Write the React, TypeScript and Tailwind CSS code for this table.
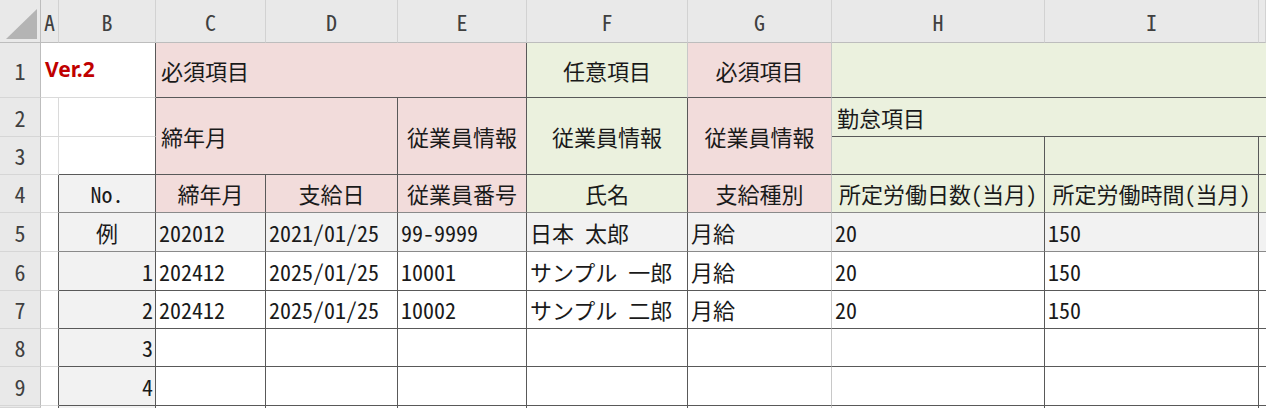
import * as React from 'react';

// Excel-like sheet: fixed column widths / row heights taken from the screenshot
const font = "font-['Noto_Sans_CJK_JP','Noto_Sans',sans-serif] [font-feature-settings:'hwid']";

function Cell({ className = '', children }: { className?: string; children?: React.ReactNode }) {
  return (
    <div className={`flex min-w-0 items-center overflow-hidden whitespace-nowrap ${className}`}>{children}</div>
  );
}

function ColHead({ label }: { label: string }) {
  return (
    <Cell className="justify-center border-r border-b border-r-[#d2d2d2] border-b-[#bdbdbd] bg-[#e9e9e9] text-[22px] text-[#404040]">
      {label}
    </Cell>
  );
}

function RowHead({ n }: { n?: number }) {
  return (
    <Cell className="justify-center border-r border-b border-r-[#bdbdbd] border-b-[#d6d6d6] bg-[#e9e9e9] text-[22px] text-[#404040]">
      {n}
    </Cell>
  );
}

interface DataRow {
  no: string;
  tone: 'gray' | 'white';
  values: string[];
}

const rows: DataRow[] = [
  { no: '例', tone: 'gray', values: ['202012', '2021/01/25', '99-9999', '日本 太郎', '月給', '20', '150'] },
  { no: '1', tone: 'white', values: ['202412', '2025/01/25', '10001', 'サンプル 一郎', '月給', '20', '150'] },
  { no: '2', tone: 'white', values: ['202412', '2025/01/25', '10002', 'サンプル 二郎', '月給', '20', '150'] },
  { no: '3', tone: 'white', values: ['', '', '', '', '', '', ''] },
  { no: '4', tone: 'white', values: ['', '', '', '', '', '', ''] },
];

export default function App() {
  return (
    <div
      className={`grid h-[408px] w-[1266px] grid-cols-[41px_18px_97px_110px_132px_129px_161px_144px_213px_214px_1fr] grid-rows-[43px_55px_39px_38px_38px_39px_39px_38px_38px_39px_1fr] overflow-hidden bg-white text-[22px] text-[#1a1a1a] ${font}`}
    >
      {/* column letters; J is too narrow for its letter to show */}
      <Cell className="items-end justify-end border-r border-b border-r-[#bdbdbd] border-b-[#bdbdbd] bg-[#e9e9e9] pr-[3px] pb-[3px]">
        <svg width="31" height="30" viewBox="0 0 31 30">
          <polygon points="31,0 31,30 0,30" fill="#b4b4b4" />
        </svg>
      </Cell>
      {['A', 'B', 'C', 'D', 'E', 'F', 'G', 'H', 'I', ''].map((c, i) => (
        <ColHead key={i} label={c} />
      ))}

      {/* row 1 */}
      <RowHead n={1} />
      <Cell className="col-span-2 border-r border-b border-r-[#595959] border-b-[#dadada] pl-[4px] font-['Noto_Sans','Liberation_Sans',sans-serif] text-[21px] font-bold text-[#c00000] [font-feature-settings:normal]">
        Ver.2
      </Cell>
      <Cell className="col-span-3 border-r border-b border-[#595959] bg-[#f2dcdb] pl-[5px]">必須項目</Cell>
      <Cell className="justify-center border-r border-b border-r-[#c8c8c8] border-b-[#595959] bg-[#ebf1de]">任意項目</Cell>
      <Cell className="justify-center border-r border-b border-r-[#c8c8c8] border-b-[#595959] bg-[#f2dcdb]">必須項目</Cell>
      <Cell className="col-span-3 border-b border-[#595959] bg-[#ebf1de]" />

      {/* rows 2-3 */}
      <RowHead n={2} />
      <Cell className="border-r border-b border-[#dadada]" />
      <Cell className="border-r border-b border-r-[#595959] border-b-[#dadada]" />
      <Cell className="col-span-2 row-span-2 border-r border-b border-[#595959] bg-[#f2dcdb] pl-[5px]">締年月</Cell>
      <Cell className="row-span-2 justify-center border-r border-b border-[#595959] bg-[#f2dcdb]">従業員情報</Cell>
      <Cell className="row-span-2 justify-center border-r border-b border-[#595959] bg-[#ebf1de]">従業員情報</Cell>
      <Cell className="row-span-2 justify-center border-r border-b border-r-[#c8c8c8] border-b-[#595959] bg-[#f2dcdb]">
        従業員情報
      </Cell>
      <Cell className="col-span-3 border-b border-[#595959] bg-[#ebf1de] pl-[5px]">勤怠項目</Cell>

      <RowHead n={3} />
      <Cell className="border-r border-b border-r-[#dadada] border-b-[#dadada]" />
      <Cell className="border-r border-b border-[#595959]" />
      <Cell className="border-r border-b border-[#595959] bg-[#ebf1de]" />
      <Cell className="border-r border-b border-[#595959] bg-[#ebf1de]" />
      <Cell className="border-b border-[#595959] bg-[#ebf1de]" />

      {/* row 4: field names */}
      <RowHead n={4} />
      <Cell className="border-r border-b border-r-[#595959] border-b-[#dadada]" />
      <Cell className="justify-center border-r border-b border-r-[#595959] border-b-[#8a8a8a] bg-[#f2f2f2]">No.</Cell>
      <Cell className="justify-center border-r border-b border-r-[#595959] border-b-[#8a8a8a] bg-[#f2dcdb]">締年月</Cell>
      <Cell className="justify-center border-r border-b border-r-[#595959] border-b-[#8a8a8a] bg-[#f2dcdb]">支給日</Cell>
      <Cell className="justify-center border-r border-b border-r-[#595959] border-b-[#8a8a8a] bg-[#f2dcdb]">従業員番号</Cell>
      <Cell className="justify-center border-r border-b border-r-[#595959] border-b-[#8a8a8a] bg-[#ebf1de]">氏名</Cell>
      <Cell className="justify-center border-r border-b border-r-[#c8c8c8] border-b-[#8a8a8a] bg-[#f2dcdb]">支給種別</Cell>
      <Cell className="justify-center border-r border-b border-r-[#595959] border-b-[#8a8a8a] bg-[#ebf1de]">
        所定労働日数(当月)
      </Cell>
      <Cell className="justify-center border-r border-b border-r-[#595959] border-b-[#8a8a8a] bg-[#ebf1de]">
        所定労働時間(当月)
      </Cell>
      <Cell className="border-b border-[#8a8a8a] bg-[#ebf1de]" />

      {/* rows 5-9: sample + data */}
      {rows.map((r, i) => {
        const bottom = i === 0 ? 'border-b-[#8a8a8a]' : 'border-b-[#595959]';
        const bg = r.tone === 'gray' ? 'bg-[#f2f2f2]' : 'bg-white';
        return (
          <React.Fragment key={r.no}>
            <RowHead n={i + 5} />
            <Cell className="border-r border-b border-r-[#595959] border-b-[#dadada]" />
            <Cell
              className={`border-r border-b border-r-[#595959] ${bottom} bg-[#f2f2f2] ${
                i === 0 ? 'justify-center' : 'justify-end pr-[2px]'
              }`}
            >
              {r.no}
            </Cell>
            {r.values.map((v, j) => (
              <Cell
                key={j}
                className={`border-r border-b ${j === 4 ? 'border-r-[#c8c8c8]' : 'border-r-[#595959]'} ${bottom} ${bg} pl-[3px]`}
              >
                {v}
              </Cell>
            ))}
            <Cell className={`border-b ${bottom} ${bg}`} />
          </React.Fragment>
        );
      })}

      {/* row 10, cut off by the window */}
      <RowHead />
      <Cell className="border-r border-[#595959]" />
      <Cell className="border-r border-[#595959] bg-[#f2f2f2]" />
      {[0, 1, 2, 3, 4, 5, 6].map((j) => (
        <Cell key={j} className={`border-r ${j === 4 ? 'border-[#c8c8c8]' : 'border-[#595959]'}`} />
      ))}
      <Cell />
    </div>
  );
}
